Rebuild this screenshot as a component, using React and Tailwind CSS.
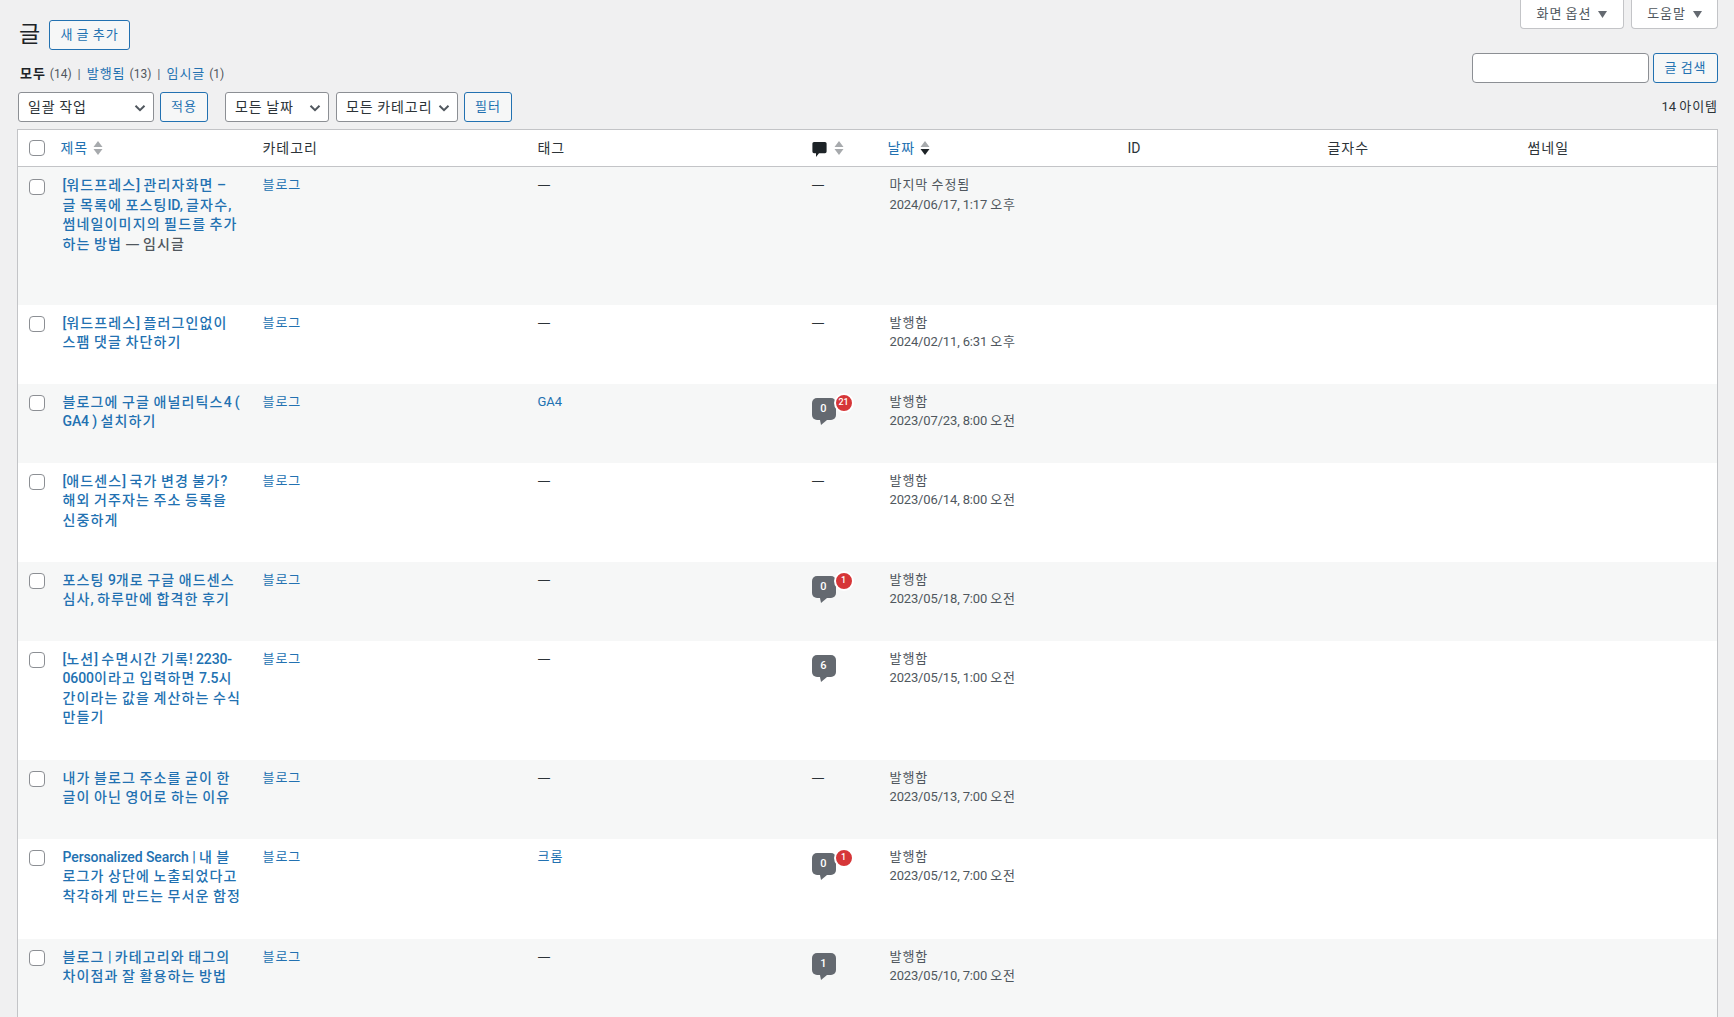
import React from "react";

function K({ children }) {
  const parts = String(children).split(/([가-힣]+)/);
  return (
    <>
      {parts.map((p, i) =>
        /[가-힣]/.test(p) ? (
          <span key={i} className="tracking-[0.95px]">{p}</span>
        ) : (
          <span key={i}>{p}</span>
        )
      )}
    </>
  );
}

function KT({ children }) {
  const parts = String(children).split(/([가-힣]+)/);
  return (
    <>
      {parts.map((p, i) =>
        /[가-힣]/.test(p) ? (
          <span key={i} className="tracking-[1.15px]">{p}</span>
        ) : (
          <span key={i} className="tracking-[-0.1px]">{p}</span>
        )
      )}
    </>
  );
}

const FONT = "font-['Roboto','Noto_Sans_CJK_KR',sans-serif]";

function Btn({ children, className = "" }) {
  return (
    <button className={`h-[30px] rounded-[3px] border border-[#2271b1] bg-[#f6f7f7] text-[13px] text-[#2271b1] ${className}`}>
      <K>{children}</K>
    </button>
  );
}

function Sel({ children, w }) {
  return (
    <div className={`relative h-[30px] rounded-[3px] border border-[#8c8f94] bg-white text-[14px] leading-[28px] text-[#2c3338] ${w} pl-[9px]`}>
      <K>{children}</K>
      <svg className="absolute right-[5px] top-[7px]" width="16" height="16" viewBox="0 0 16 16">
        <path d="M3.500 5.800 8 10.200l4.500-4.400" fill="none" stroke="#50575e" strokeWidth="2" />
      </svg>
    </div>
  );
}

function Check() {
  return <input type="checkbox" className="block h-4 w-4 appearance-none rounded-[4px] border border-[#8c8f94] bg-white" />;
}

function Sort({ active }) {
  return (
    <svg className="ml-[5px] inline-block" width="10" height="16" viewBox="0 0 10 16">
      <path d="M5 1 9.500 7H.500z" fill="#a7aaad" />
      <path d="M5 15 .500 9h9z" fill={active ? "#1d2327" : "#a7aaad"} />
    </svg>
  );
}

function Bubble({ n, pending }) {
  return (
    <div className="relative mt-[6px] h-[27px] w-[24px]">
      <div className="flex h-[22px] w-[24px] items-center justify-center rounded-[5px] bg-[#646970] text-[11px] font-medium text-white">{n}</div>
      <svg className="absolute left-[8px] top-[22px]" width="8" height="5" viewBox="0 0 8 5">
        <path d="M0 0h7L1 5z" fill="#646970" />
      </svg>
      {pending != null && (
        <div className="absolute left-[22px] top-[-5px] flex h-[20px] min-w-[20px] items-center justify-center rounded-full border-2 border-white bg-[#d63638] px-[3px] text-[9px] font-medium text-white">
          {pending}
        </div>
      )}
    </div>
  );
}

const rows = [
  { h: "h-[138px]", lines: ["[워드프레스] 관리자화면 –", "글 목록에 포스팅ID, 글자수,", "썸네일이미지의 필드를 추가", "하는 방법"], draft: true, tag: null, com: null, st: "마지막 수정됨", date: "2024/06/17, 1:17 오후" },
  { h: "h-[79px]", lines: ["[워드프레스] 플러그인없이", "스팸 댓글 차단하기"], tag: null, com: null, st: "발행함", date: "2024/02/11, 6:31 오후" },
  { h: "h-[79px]", lines: ["블로그에 구글 애널리틱스4 (", "GA4 ) 설치하기"], tag: "GA4", com: { n: 0, p: 21 }, st: "발행함", date: "2023/07/23, 8:00 오전" },
  { h: "h-[99px]", lines: ["[애드센스] 국가 변경 불가?", "해외 거주자는 주소 등록을", "신중하게"], tag: null, com: null, st: "발행함", date: "2023/06/14, 8:00 오전" },
  { h: "h-[79px]", lines: ["포스팅 9개로 구글 애드센스", "심사, 하루만에 합격한 후기"], tag: null, com: { n: 0, p: 1 }, st: "발행함", date: "2023/05/18, 7:00 오전" },
  { h: "h-[119px]", lines: ["[노션] 수면시간 기록! 2230-", "0600이라고 입력하면 7.5시", "간이라는 값을 계산하는 수식", "만들기"], tag: null, com: { n: 6 }, st: "발행함", date: "2023/05/15, 1:00 오전" },
  { h: "h-[79px]", lines: ["내가 블로그 주소를 굳이 한", "글이 아닌 영어로 하는 이유"], tag: null, com: null, st: "발행함", date: "2023/05/13, 7:00 오전" },
  { h: "h-[100px]", lines: ["Personalized Search | 내 블", "로그가 상단에 노출되었다고", "착각하게 만드는 무서운 함정"], tag: "크롬", com: { n: 0, p: 1 }, st: "발행함", date: "2023/05/12, 7:00 오전" },
  { h: "h-[100px]", lines: ["블로그 | 카테고리와 태그의", "차이점과 잘 활용하는 방법"], tag: null, com: { n: 1 }, st: "발행함", date: "2023/05/10, 7:00 오전" },
];

function Dash() {
  return <span className="font-['Noto_Sans',sans-serif] text-[13px] leading-[0] text-[#2c3338]">—</span>;
}

export default function App() {
  return (
    <div className={`h-screen overflow-hidden bg-[#f0f0f1] text-[13px] text-[#2c3338] ${FONT}`}>
      <div className="flex h-[29px] justify-end gap-[7px] pr-[16px]">
        <div className="flex h-[29px] w-[104px] items-center justify-center gap-[7px] rounded-b-[4px] border border-t-0 border-[#c3c4c7] bg-white text-[#50575e]">
          <span><K>화면 옵션</K></span>
          <svg width="9" height="7" viewBox="0 0 9 7"><path d="M0 0h9L4.500 7z" fill="#646970" /></svg>
        </div>
        <div className="flex h-[29px] w-[87px] items-center justify-center gap-[7px] rounded-b-[4px] border border-t-0 border-[#c3c4c7] bg-white text-[#50575e]">
          <span><K>도움말</K></span>
          <svg width="9" height="7" viewBox="0 0 9 7"><path d="M0 0h9L4.500 7z" fill="#646970" /></svg>
        </div>
      </div>

      <div className="pl-[17px] pr-[16px]">
        <div className="-mt-[9px] flex justify-between">
          <div>
            <div className="flex h-[30px] items-center pl-[2px]">
              <h1 className="w-[30px] text-[23px] leading-[30px] text-[#1d2327]">글</h1>
              <Btn className="w-[81px]">새 글 추가</Btn>
            </div>
            <div className="mt-[14px] flex h-[20px] items-center pl-[3px] text-[13px] leading-[20px] text-[#50575e]">
              <b className="font-semibold text-[#1d2327]"><K>모두</K></b>
              <span className="ml-[4px] text-[12px]">(14)</span>
              <span className="mx-[6px] text-[#646970]">|</span>
              <span className="text-[#2271b1]"><K>발행됨</K></span>
              <span className="ml-[4px] text-[12px]">(13)</span>
              <span className="mx-[6px] text-[#646970]">|</span>
              <span className="text-[#2271b1]"><K>임시글</K></span>
              <span className="ml-[4px] text-[12px]">(1)</span>
            </div>
          </div>
          <div className="flex h-[63px] items-end gap-[4px]">
            <div className="h-[30px] w-[177px] rounded-[4px] border border-[#8c8f94] bg-white" />
            <Btn className="w-[65px]">글 검색</Btn>
          </div>
        </div>

        <div className="mt-[8px] flex h-[30px] items-center pl-[1px]">
          <Sel w="w-[136px]">일괄 작업</Sel>
          <Btn className="ml-[6px] w-[48px]">적용</Btn>
          <div className="ml-[17px]"><Sel w="w-[104px]">모든 날짜</Sel></div>
          <div className="ml-[7px]"><Sel w="w-[122px]">모든 카테고리</Sel></div>
          <Btn className="ml-[6px] w-[48px]">필터</Btn>
          <span className="ml-auto text-[13px] text-[#2c3338]"><K>14 아이템</K></span>
        </div>

        <table className="mt-[7px] w-[1701px] table-fixed border border-[#c3c4c7] bg-white">
          <colgroup>
            <col className="w-[35px]" />
            <col className="w-[200px]" />
            <col className="w-[275px]" />
            <col className="w-[275px]" />
            <col className="w-[76px]" />
            <col className="w-[239px]" />
            <col className="w-[200px]" />
            <col className="w-[200px]" />
            <col />
          </colgroup>
          <thead>
            <tr className="h-[37px] border-b border-[#c3c4c7] text-left text-[14px]">
              <th className="pl-[11px] font-normal"><Check /></th>
              <th className="pl-[8px] font-normal text-[#2271b1]"><span className="flex items-center"><K>제목</K><Sort /></span></th>
              <th className="pl-[10px] font-normal"><K>카테고리</K></th>
              <th className="pl-[10px] font-normal"><K>태그</K></th>
              <th className="pl-[9px] font-normal">
                <span className="flex items-center">
                  <svg className="mt-[2px]" width="15" height="17" viewBox="0 0 15 17"><path d="M2 1h11a1.600 1.600 0 0 1 1.600 1.600v8a1.600 1.600 0 0 1-1.600 1.600H7L4 16v-3.800H2A1.600 1.600 0 0 1 .400 10.600v-8A1.600 1.600 0 0 1 2 1z" fill="#1d2327" /></svg>
                  <span className="ml-[2px] flex"><Sort /></span>
                </span>
              </th>
              <th className="pl-[9px] font-normal text-[#2271b1]"><span className="flex items-center"><K>날짜</K><Sort active /></span></th>
              <th className="pl-[10px] font-normal">ID</th>
              <th className="pl-[10px] font-normal"><K>글자수</K></th>
              <th className="pl-[10px] font-normal"><K>썸네일</K></th>
            </tr>
          </thead>
          <tbody>
            {rows.map((r, i) => (
              <tr key={i} className={`${r.h} align-top leading-[19.500px] ${i % 2 === 0 ? "bg-[#f6f7f7]" : "bg-white"}`}>
                <td className="pl-[11px] pt-[11.500px]"><Check /></td>
                <td className="whitespace-nowrap pl-[10px] pt-[9px] text-[14px] font-medium text-[#2271b1]">
                  {r.lines.map((l, j) => (
                    <div key={j} className="h-[19.500px]">
                      <KT>{l}</KT>
                      {r.draft && j === r.lines.length - 1 && (
                        <span className="text-[#50575e]"> <span className="font-['Noto_Sans',sans-serif] leading-[0]">—</span> <KT>임시글</KT></span>
                      )}
                    </div>
                  ))}
                </td>
                <td className="pl-[10px] pt-[8px] text-[#2271b1]"><K>블로그</K></td>
                <td className="pl-[10px] pt-[8px] text-[#2271b1]">{r.tag ? <K>{r.tag}</K> : <Dash />}</td>
                <td className="pl-[9px] pt-[8px]">
                  {r.com ? <Bubble n={r.com.n} pending={r.com.p} /> : <Dash />}
                </td>
                <td className="pl-[11px] pt-[8px] text-[#50575e]">
                  <div><K>{r.st}</K></div>
                  <div className="tracking-[-0.15px]"><K>{r.date}</K></div>
                </td>
                <td />
                <td />
                <td />
              </tr>
            ))}
          </tbody>
        </table>
      </div>
    </div>
  );
}
